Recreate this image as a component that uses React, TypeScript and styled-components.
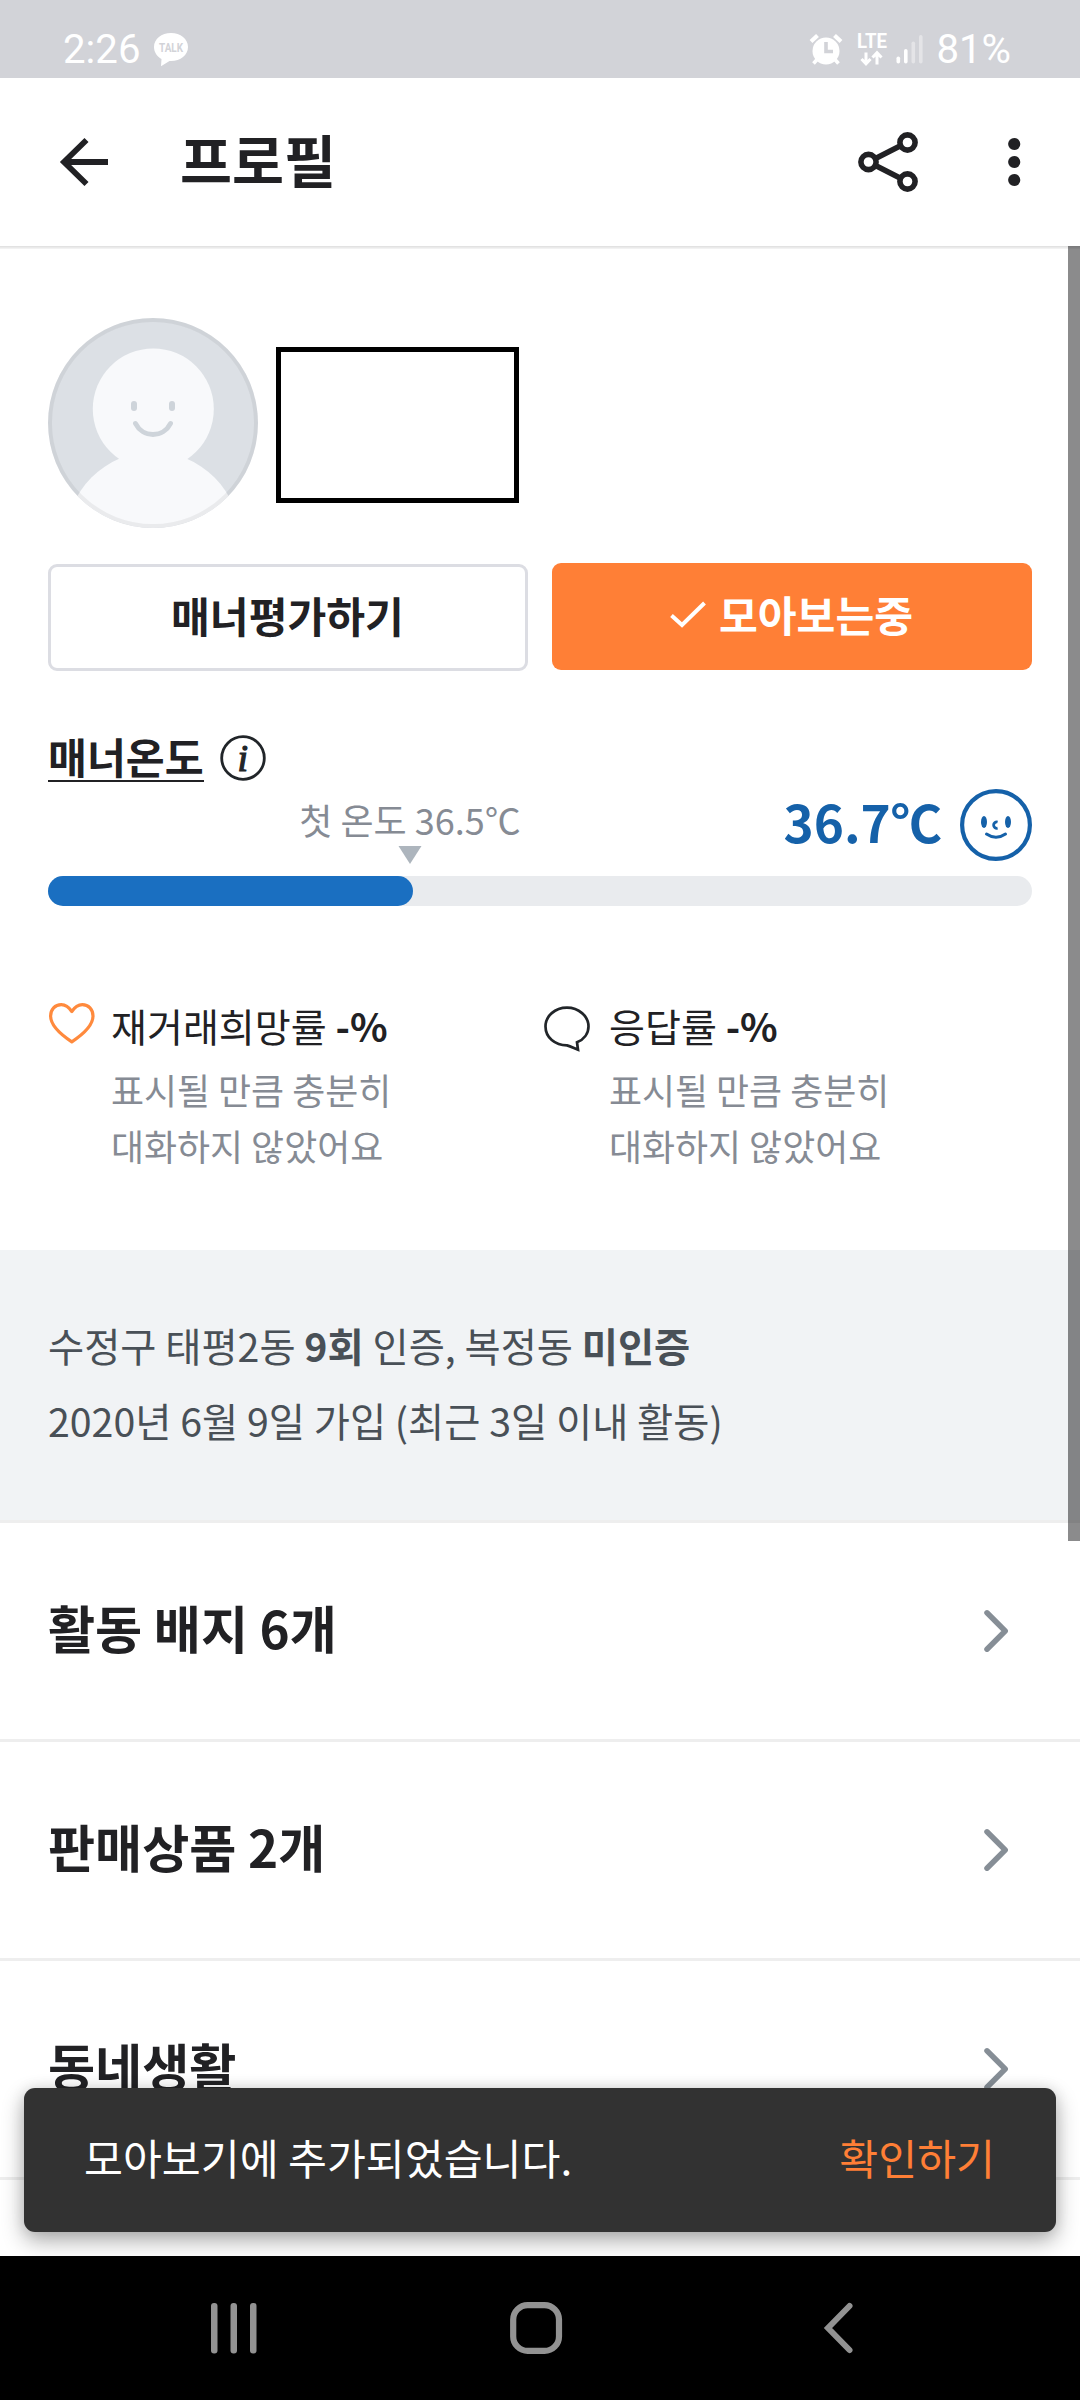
import React from 'react';
import styled, { createGlobalStyle } from 'styled-components';

const GlobalStyle = createGlobalStyle`
  * { box-sizing: border-box; }
  body { margin: 0; background: #fff; }
`;

const Screen = styled.div`
  display: flex;
  flex-direction: column;
  position: relative;
  width: 1080px;
  height: 2400px;
  overflow: hidden;
  background: #fff;
  color: #212124;
  font-family: 'Noto Sans CJK KR', 'Noto Sans', sans-serif;
  white-space: nowrap;
`;

const StatusBar = styled.div`
  display: flex;
  justify-content: space-between;
  flex: none;
  height: 78px;
  padding: 22px 69px 0 63px;
  background: #d2d3d8;
  color: #fff;
  font-family: Roboto, sans-serif;
`;

const StatusGroup = styled.div`
  display: flex;
  align-items: center;
  height: 56px;
`;

const StatusText = styled.span`
  font-size: 40.2px;
  line-height: 56px;
`;

const BatteryText = styled(StatusText)`
  margin-left: 12px;
`;

const StatusIcon = styled.svg<{ $ml: number }>`
  display: block;
  flex: none;
  margin-left: ${(p) => p.$ml}px;
  overflow: visible;
`;

const Header = styled.header`
  display: flex;
  align-items: center;
  flex: none;
  height: 168px;
  padding: 0 59px 0 59px;
`;

const HeaderTitle = styled.h1`
  flex: 1;
  margin: 0;
  padding: 0 0 8px 71px;
  font-size: 56.5px;
  line-height: 70px;
  font-weight: 700;
`;

const MenuIcon = styled.svg`
  display: block;
  margin-left: 90px;
`;

const Divider = styled.div`
  flex: none;
  height: 3px;
  background: linear-gradient(#dedede, #f6f6f6);
`;

const Content = styled.main`
  flex: none;
  height: 2007px;
  overflow: hidden;
`;

const Profile = styled.section`
  height: 1001px;
  padding: 69px 48px 0;
`;

const ProfileTop = styled.div`
  display: flex;
  align-items: flex-start;
  gap: 18px;
`;

const NameBox = styled.div`
  width: 243px;
  height: 156px;
  margin-top: 29px;
  border: 5px solid #000;
`;

const Buttons = styled.div`
  display: grid;
  grid-template-columns: 480px 480px;
  align-items: start;
  gap: 24px;
  margin-top: 35px;
`;

const Button = styled.button<{ $filled?: boolean }>`
  display: flex;
  align-items: center;
  justify-content: center;
  gap: 13px;
  height: 107px;
  margin: ${(p) => (p.$filled ? 0 : 1)}px 0 0;
  padding: 0 1px 5px 0;
  border: ${(p) => (p.$filled ? 'none' : '3px solid #dcdde3')};
  border-radius: 9px;
  background: ${(p) => (p.$filled ? '#ff7f36' : '#fff')};
  color: ${(p) => (p.$filled ? '#fff' : '#212124')};
  font: 700 42.2px/60px 'Noto Sans CJK KR', sans-serif;
`;

const MannerTitle = styled.div`
  display: flex;
  align-items: flex-start;
  gap: 16px;
  height: 47px;
  margin-top: 64px;
`;

const MannerLabel = styled.span`
  padding-bottom: 3px;
  border-bottom: 2px solid #212124;
  font-size: 42.3px;
  line-height: 42px;
  font-weight: 700;
`;

const GaugeHead = styled.div`
  display: flex;
  justify-content: space-between;
  height: 87px;
  margin-top: 7px;
`;

const FirstTemp = styled.div`
  display: flex;
  flex-direction: column;
  align-items: center;
  justify-content: flex-end;
  gap: 9px;
  width: 724px;
  padding-bottom: 12px;
  color: #868b94;
  font-size: 36px;
  line-height: 36px;
`;

const Current = styled.div`
  display: flex;
  align-items: center;
  gap: 18px;
  height: 72px;
  color: #1561a9;
`;

const CurrentValue = styled.span`
  padding-bottom: 9px;
  font-size: 51.2px;
  line-height: 60px;
  font-weight: 700;
`;

const Gauge = styled.div`
  height: 30px;
  border-radius: 15px;
  background: #e9ebee;
`;

const GaugeFill = styled.div`
  width: 365px;
  height: 30px;
  border-radius: 15px;
  background: #1a6fc1;
`;

const Stats = styled.div`
  display: grid;
  grid-template-columns: 496px 1fr;
  margin-top: 93px;
`;

const Stat = styled.div<{ $gap: number }>`
  display: flex;
  align-items: flex-start;
  gap: ${(p) => p.$gap}px;
`;

const StatIcon = styled.svg<{ $top: number }>`
  display: block;
  flex: none;
  margin-top: ${(p) => p.$top}px;
`;

const StatTitle = styled.div`
  font-size: 39.1px;
  line-height: 52px;
`;

const StatNote = styled.div`
  margin-top: 10px;
  color: #868b94;
  font-size: 35.9px;
  line-height: 56px;
`;

const Info = styled.section`
  height: 273px;
  padding: 57px 48px 0;
  border-bottom: 3px solid #eee;
  background: #f1f3f5;
  color: #495057;
  font-size: 39.3px;
  line-height: 75px;
`;

const Row = styled.div`
  display: flex;
  align-items: center;
  justify-content: space-between;
  height: 219px;
  padding: 0 69px 0 48px;
  border-bottom: 3px solid #eee;
`;

const RowTitle = styled.h2`
  margin: 0;
  padding-bottom: 8px;
  font-size: 51.2px;
  line-height: 70px;
  font-weight: 700;
`;

const ScrollThumb = styled.div`
  position: absolute;
  top: 246px;
  right: 0;
  width: 12px;
  height: 1295px;
  background: rgba(0, 0, 2, 0.455);
`;

const Snackbar = styled.div`
  position: absolute;
  left: 24px;
  right: 24px;
  top: 2088px;
  display: flex;
  align-items: center;
  justify-content: space-between;
  height: 144px;
  padding: 0 61px 7px 60px;
  border-radius: 11px;
  background: #323232;
  color: #fff;
  font-size: 42.3px;
  line-height: 60px;
  box-shadow: 0 9px 22px rgba(0, 0, 0, 0.32), 0 0 14px rgba(0, 0, 0, 0.1);
`;

const SnackAction = styled.span`
  color: #ff7f36;
`;

const NavBar = styled.nav`
  position: relative;
  display: flex;
  align-items: center;
  flex: none;
  height: 144px;
  padding-left: 208px;
  background: #000;
`;

const NavIcon = styled.svg<{ $ml?: number }>`
  display: block;
  margin-left: ${(p) => p.$ml || 0}px;
`;

const Chevron = () => (
  <svg width="30" height="50" viewBox="0 0 30 50" fill="none" stroke="#868e96" strokeWidth="5.5" strokeLinecap="round" strokeLinejoin="round">
    <path d="M6 6.8 L24.2 25 L6 43.2" />
  </svg>
);

const Avatar = () => (
  <svg width="210" height="210" viewBox="0 0 210 210">
    <defs>
      <clipPath id="avatar">
        <circle cx="105" cy="105" r="105" />
      </clipPath>
    </defs>
    <g clipPath="url(#avatar)">
      <rect width="210" height="210" fill="#dce0e5" />
      <circle cx="105" cy="221" r="87" fill="#f8f9fb" />
      <circle cx="105.3" cy="91" r="60.5" fill="#f8f9fb" />
    </g>
    <circle cx="105" cy="105" r="103" fill="none" stroke="#000" strokeOpacity="0.055" strokeWidth="4" />
    <rect x="83" y="83" width="6" height="10" rx="3" fill="#ced4da" />
    <rect x="121" y="83" width="6" height="10" rx="3" fill="#ced4da" />
    <path d="M87.5 105.5 A19.5 19.5 0 0 0 122.5 105.5" fill="none" stroke="#ced4da" strokeWidth="5" strokeLinecap="round" />
  </svg>
);

const rows = ['활동 배지 6개', '판매상품 2개', '동네생활'];

export default function App() {
  return (
    <Screen>
      <GlobalStyle />
      <StatusBar>
        <StatusGroup>
          <StatusText>2:26</StatusText>
          <StatusIcon $ml={13} width="34" height="34" viewBox="0 0 34 34">
            <path d="M17 0 C26.5 0 34 6 34 14 S26.5 28 17 28 L15.5 28 L7 33.3 L7.5 26 C3 23.5 0 19 0 14 C0 6 7.5 0 17 0Z" fill="#fff" />
            <text x="5" y="19.3" fontFamily="Roboto, sans-serif" fontWeight="700" fontSize="12.5" fill="#d2d3d8" textLength="24" lengthAdjust="spacingAndGlyphs">TALK</text>
          </StatusIcon>
        </StatusGroup>
        <StatusGroup>
          <StatusIcon $ml={0} width="34" height="32" viewBox="0 0 34 32">
            <circle cx="17" cy="17" r="13.5" fill="#fff" />
            <path d="M2 7.5 L8.5 1.5 M32 7.5 L25.5 1.5" stroke="#fff" strokeWidth="4.2" />
            <path d="M8.5 25 L4.5 29.5 M25.5 25 L29.5 29.5" stroke="#fff" strokeWidth="3.6" />
            <path d="M17 8 V17.5 H24" fill="none" stroke="#d2d3d8" strokeWidth="3.6" />
          </StatusIcon>
          <StatusIcon $ml={13} width="32" height="46" viewBox="0 -6 32 46">
            <text x="1" y="14.6" fontFamily="Roboto, sans-serif" fontWeight="700" fontSize="19.5" fill="#fff" textLength="30" lengthAdjust="spacingAndGlyphs">LTE</text>
            <path d="M10 19.5 V31 M5.5 26 L10 30.8 L14.5 26 M21 31.5 V20 M16.5 24.5 L21 19.7 L25.5 24.5" fill="none" stroke="#fff" strokeWidth="3" />
          </StatusIcon>
          <StatusIcon $ml={8} width="28" height="34" viewBox="0 0 28 34" fill="#fff">
            <rect x="0.5" y="23.5" width="3.6" height="7" rx="1.8" />
            <rect x="8" y="16" width="3.6" height="14.5" rx="1.8" />
            <rect x="15.5" y="8.5" width="3.6" height="22" rx="1.8" opacity="0.4" />
            <rect x="23" y="2" width="3.6" height="28.5" rx="1.8" opacity="0.4" />
          </StatusIcon>
          <BatteryText>81%</BatteryText>
        </StatusGroup>
      </StatusBar>

      <Header>
        <svg width="50" height="50" viewBox="0 0 50 50" fill="none" stroke="#212124" strokeWidth="5.8">
          <path d="M49 25 H6 M27.5 3 L5 25 L27.5 47" />
        </svg>
        <HeaderTitle>프로필</HeaderTitle>
        <svg width="60" height="60" viewBox="0 0 60 60" fill="none" stroke="#212124" strokeWidth="5.6">
          <circle cx="10.5" cy="30" r="7.6" />
          <circle cx="49.5" cy="10.5" r="7.6" />
          <circle cx="49.5" cy="49.5" r="7.6" />
          <path d="M17.5 26.5 L42.5 13.8 M17.5 33.5 L42.5 46.2" />
        </svg>
        <MenuIcon width="13" height="50" viewBox="0 0 13 50" fill="#212124">
          <circle cx="6.2" cy="7" r="6.1" />
          <circle cx="6.2" cy="25" r="6.1" />
          <circle cx="6.2" cy="43" r="6.1" />
        </MenuIcon>
      </Header>
      <Divider />

      <Content>
        <Profile>
          <ProfileTop>
            <Avatar />
            <NameBox />
          </ProfileTop>
          <Buttons>
            <Button>매너평가하기</Button>
            <Button $filled>
              <svg width="36" height="27" viewBox="0 0 36 27" fill="none" stroke="#fff" strokeWidth="4">
                <path d="M1.5 14.5 L12 24 L34.5 2" />
              </svg>
              모아보는중
            </Button>
          </Buttons>
          <MannerTitle>
            <MannerLabel>매너온도</MannerLabel>
            <svg width="46" height="46" viewBox="0 0 46 46">
              <circle cx="23" cy="23" r="21.3" fill="none" stroke="#212529" strokeWidth="2.8" />
              <text x="22.8" y="35.5" textAnchor="middle" fontFamily="'Liberation Serif', serif" fontStyle="italic" fontSize="38" fill="#212529" stroke="#212529" strokeWidth="1.2">i</text>
            </svg>
          </MannerTitle>
          <GaugeHead>
            <FirstTemp>
              <span>첫 온도 36.5℃</span>
              <svg width="24" height="18" viewBox="0 0 24 18">
                <path d="M0.5 0 H23.5 L12 18Z" fill="#adb5bd" />
              </svg>
            </FirstTemp>
            <Current>
              <CurrentValue>36.7℃</CurrentValue>
              <svg width="72" height="72" viewBox="0 0 72 72" fill="none" stroke="#1561a9">
                <circle cx="36" cy="36" r="33.9" strokeWidth="4.2" />
                <ellipse cx="24" cy="33" rx="3" ry="6" fill="#1561a9" stroke="none" />
                <ellipse cx="48" cy="33" rx="3" ry="6" fill="#1561a9" stroke="none" />
                <path d="M37.6 33 A3.2 3.2 0 1 0 37.6 39.2" strokeWidth="2.8" />
                <path d="M26.5 45 Q36 51.5 45.5 45" strokeWidth="3" strokeLinecap="round" />
              </svg>
            </Current>
          </GaugeHead>
          <Gauge>
            <GaugeFill />
          </Gauge>
          <Stats>
            <Stat $gap={16}>
              <StatIcon $top={3} width="47" height="42" viewBox="0 0 47 42" fill="none" stroke="#ff8a3d" strokeWidth="3.2" strokeLinejoin="round">
                <path d="M23.8 9.5 C20.5 4.5 17 2.6 13.3 2.6 C7 2.6 2.6 7.5 2.6 14 C2.6 21.5 9 30 23.8 39.8 C38.6 30 45 21.5 45 14 C45 7.5 40.6 2.6 34.3 2.6 C30.6 2.6 27.1 4.5 23.8 9.5Z" />
              </StatIcon>
              <div>
                <StatTitle>
                  재거래희망률 <b>-%</b>
                </StatTitle>
                <StatNote>
                  표시될 만큼 충분히
                  <br />
                  대화하지 않았어요
                </StatNote>
              </div>
            </Stat>
            <Stat $gap={18}>
              <StatIcon $top={7} width="47" height="47" viewBox="0 0 47 47" fill="none" stroke="#212529" strokeWidth="2.7">
                <path d="M23 1.6 C34.5 1.6 44.5 10 44.5 20.5 C44.5 27.5 40 33.5 33 36.3 L34 43.8 C30.5 42.5 27 40.5 23 39.4 C11 39.4 1.5 31.5 1.5 20.5 C1.5 10 11 1.6 23 1.6Z" />
              </StatIcon>
              <div>
                <StatTitle>
                  응답률 <b>-%</b>
                </StatTitle>
                <StatNote>
                  표시될 만큼 충분히
                  <br />
                  대화하지 않았어요
                </StatNote>
              </div>
            </Stat>
          </Stats>
        </Profile>
        <Info>
          <div>
            수정구 태평2동 <b>9회</b> 인증, 복정동 <b>미인증</b>
          </div>
          <div>2020년 6월 9일 가입 (최근 3일 이내 활동)</div>
        </Info>
        {rows.map((title) => (
          <Row key={title}>
            <RowTitle>{title}</RowTitle>
            <Chevron />
          </Row>
        ))}
      </Content>

      <ScrollThumb />
      <Snackbar>
        <span>모아보기에 추가되었습니다.</span>
        <SnackAction>확인하기</SnackAction>
      </Snackbar>

      <NavBar>
        <NavIcon width="52" height="52" viewBox="0 0 52 52" fill="#929292">
          <rect x="3" y="1" width="6.5" height="50.5" rx="3" />
          <rect x="22.5" y="1" width="6.5" height="50.5" rx="3" />
          <rect x="42" y="1" width="6.5" height="50.5" rx="3" />
        </NavIcon>
        <NavIcon $ml={249} width="54" height="54" viewBox="0 0 54 54" fill="none" stroke="#929292" strokeWidth="6.2">
          <rect x="4.2" y="4.1" width="45.8" height="45.8" rx="14.5" />
        </NavIcon>
        <NavIcon $ml={258} width="34" height="54" viewBox="0 0 34 54" fill="none" stroke="#929292" strokeWidth="6" strokeLinecap="round">
          <path d="M28.5 5 L7 27 L28.5 49" />
        </NavIcon>
      </NavBar>
    </Screen>
  );
}
